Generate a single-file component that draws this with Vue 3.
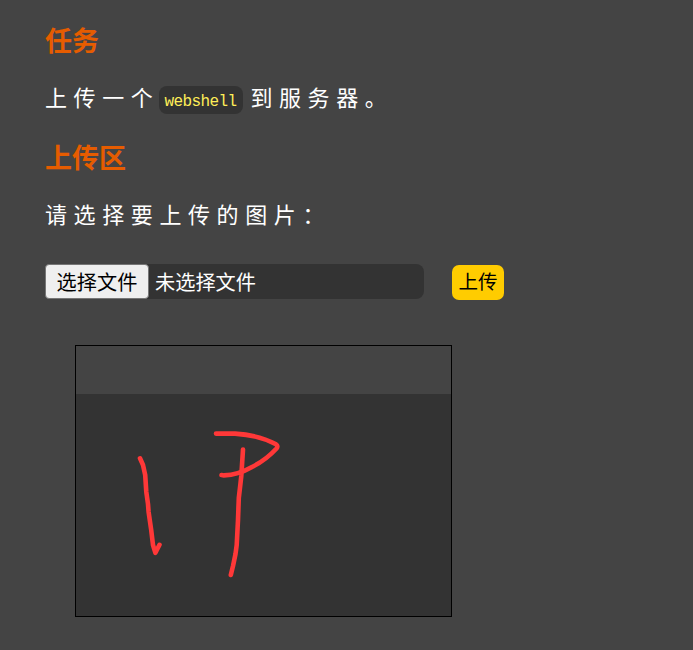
<script setup>
const fileStatus = '未选择文件'
</script>

<template>
  <main class="page">
    <h3 class="title">任务</h3>
    <p class="text">上传一个<code class="code">webshell</code>到服务器。</p>
    <h3 class="title second">上传区</h3>
    <p class="text prompt">请选择要上传的图片：</p>
    <form class="form" @submit.prevent>
      <div class="file">
        <button type="button" class="choose">选择文件</button>
        <span class="status">{{ fileStatus }}</span>
      </div>
      <button type="submit" class="submit">上传</button>
    </form>
    <section class="preview">
      <div class="preview-head"></div>
      <svg class="drawing" viewBox="76 394 375 222" fill="none" stroke="#ff3838" stroke-width="4.6" stroke-linecap="round" stroke-linejoin="round">
        <path d="M140 458.3 L143 465 L145.2 475 L146.3 492 L148 504 L148.6 512 L151.2 530 L153 545 L155.4 552.8 L159.5 544.8" />
        <path d="M216 433.6 H235 C250 434.5 265 438.5 276 444.3 Q278.5 446 276.5 448.5 Q266 460 252 467 Q238 475 224 475.4 L221.5 475" />
        <path d="M243 449.5 L242 465 L241.3 476 L240.3 485 L238.8 498 L238 520 L236.7 545 L235.5 554 L233 566 L230.8 575" />
      </svg>
    </section>
  </main>
</template>

<style>
body {
  background: #444;
}
</style>

<style scoped>
.page {
  box-sizing: border-box;
  height: 650px;
  padding: 22px 45px 0;
  overflow: hidden;
  background: #444;
  color: #fff;
  font-family: "Noto Sans CJK SC", sans-serif;
}
.title {
  height: 36px;
  margin: 0;
  color: #e65c00;
  font-size: 27px;
  font-weight: 700;
  line-height: 36px;
}
.text {
  display: flex;
  align-items: center;
  height: 32px;
  margin: 22px 0 0;
  font-size: 22px;
  line-height: 32px;
  letter-spacing: 6.6px;
  white-space: nowrap;
}
.code {
  box-sizing: border-box;
  width: 84px;
  height: 28px;
  margin: 8px 7px 0 0;
  padding: 0 5px;
  border-radius: 8px;
  background: #333;
  color: #ffee58;
  font-family: "Liberation Mono", monospace;
  font-size: 16px;
  line-height: 32px;
  letter-spacing: -0.6px;
}
.second {
  margin-top: 27px;
}
.prompt {
  margin-top: 22px;
}
.form {
  display: flex;
  gap: 28px;
  height: 36px;
  margin: 35px 0 0;
}
.file {
  display: flex;
  align-items: flex-start;
  width: 379px;
  height: 35px;
  border-radius: 8px;
  background: #333;
}
.choose {
  box-sizing: border-box;
  width: 104px;
  height: 35px;
  padding: 0;
  border: 1px solid #767676;
  border-radius: 4px;
  background: #efefef;
  color: #000;
  font: 20.2px/33px "Noto Sans CJK SC", sans-serif;
}
.status {
  padding-left: 6px;
  font-size: 20.2px;
  line-height: 36px;
}
.submit {
  width: 52px;
  height: 35px;
  margin-top: 1px;
  padding: 0 0 3px;
  border: 0;
  border-radius: 7px;
  background: #fc0;
  color: #000;
  font: 19.5px/32px "Noto Sans CJK SC", sans-serif;
}
.preview {
  box-sizing: border-box;
  width: 377px;
  height: 272px;
  margin: 45px 0 0 30px;
  border: 1px solid #000;
  background: #333;
}
.preview-head {
  height: 48px;
  background: #444;
}
.drawing {
  display: block;
  width: 375px;
  height: 222px;
}
</style>
